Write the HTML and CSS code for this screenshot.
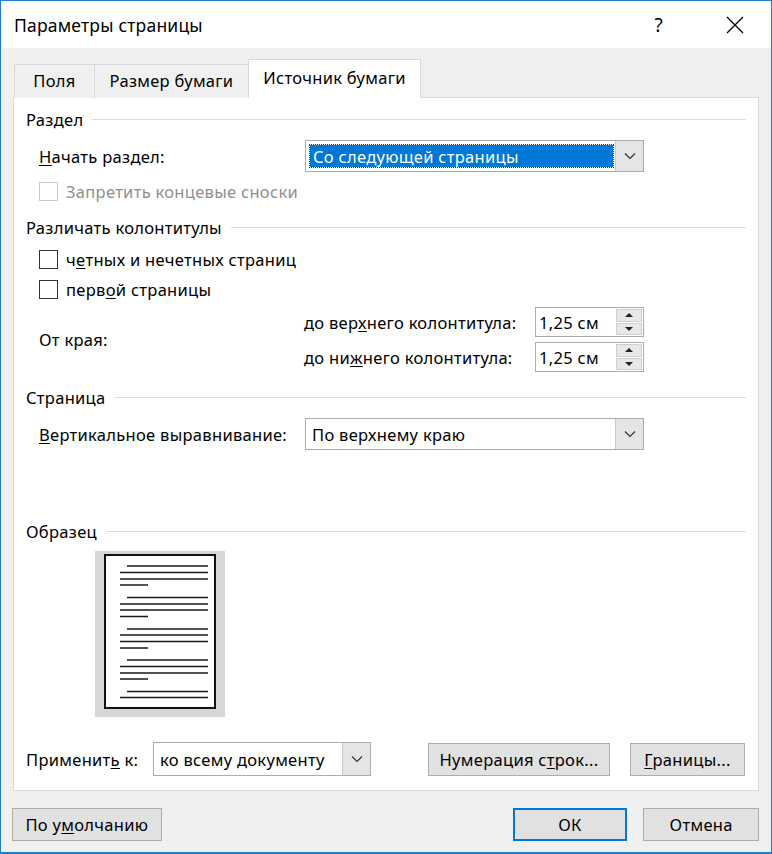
FILE: index.html
```html
<!DOCTYPE html>
<html lang="ru">
<head>
    <meta charset="UTF-8">
    <title>Параметры страницы</title>
    <link rel="stylesheet" href="styles.css">
</head>
<body>
<div class="dialog">
    <div class="titlebar">
        <span class="title">Параметры страницы</span>
        <span class="help">?</span>
        <svg class="close" width="18" height="18" viewBox="0 0 18 18">
            <path d="M1 1 L17 17 M17 1 L1 17" stroke="#000" stroke-width="1.3" fill="none"/>
        </svg>
    </div>

    <div class="body">
        <div class="tabs">
            <div class="tab">Поля</div>
            <div class="tab">Размер бумаги</div>
            <div class="tab active">Источник бумаги</div>
        </div>

        <div class="panel">
            <!-- Раздел -->
            <div class="group-title"><span>Раздел</span><i></i></div>
            <div class="row row-start">
                <span class="label"><u>Н</u>ачать раздел:</span>
                <div class="select select-wide focused">
                    <span class="select-text"><span class="sel">Со следующей страницы</span></span>
                    <span class="arrow"><svg width="12" height="8" viewBox="0 0 12 8"><path d="M1 1.5 L6 6.5 L11 1.5" stroke="#333" stroke-width="1.2" fill="none"/></svg></span>
                </div>
            </div>
            <div class="check disabled row-endnotes"><span class="box"></span>Запретить концевые сноски</div>

            <!-- Различать колонтитулы -->
            <div class="group-title gt-headers"><span>Различать колонтитулы</span><i></i></div>
            <div class="check row-even"><span class="box"></span>ч<u>е</u>тных и нечетных страниц</div>
            <div class="check row-first"><span class="box"></span>перв<u>о</u>й страницы</div>

            <div class="edge">
                <span class="label">От края:</span>
                <div class="spins">
                    <div class="spin-row">
                        <span class="spin-label">до вер<u>х</u>него колонтитула:</span>
                        <div class="spinner">
                            <span class="spin-value">1,25 см</span>
                            <span class="spin-btns">
                                <span class="up"></span>
                                <span class="down"></span>
                            </span>
                        </div>
                    </div>
                    <div class="spin-row">
                        <span class="spin-label">до ни<u>ж</u>него колонтитула:</span>
                        <div class="spinner">
                            <span class="spin-value">1,25 см</span>
                            <span class="spin-btns">
                                <span class="up"></span>
                                <span class="down"></span>
                            </span>
                        </div>
                    </div>
                </div>
            </div>

            <!-- Страница -->
            <div class="group-title gt-page"><span>Страница</span><i></i></div>
            <div class="row row-valign">
                <span class="label"><u>В</u>ертикальное выравнивание:</span>
                <div class="select select-wide">
                    <span class="select-text">По верхнему краю</span>
                    <span class="arrow"><svg width="12" height="8" viewBox="0 0 12 8"><path d="M1 1.5 L6 6.5 L11 1.5" stroke="#333" stroke-width="1.2" fill="none"/></svg></span>
                </div>
            </div>

            <!-- Образец -->
            <div class="group-title gt-sample"><span>Образец</span><i></i></div>
            <div class="preview">
                <svg width="130" height="166" viewBox="0 0 130 166">
                    <rect x="0" y="0" width="130" height="166" fill="#d7d7d7"/>
                    <rect x="10" y="4" width="110" height="153" fill="#fff" stroke="#111" stroke-width="2"/>
                    <g stroke="#1a1a1a" stroke-width="1.7">
                        <path d="M32 15 H113 M25 21.5 H113 M25 28 H113 M25 34 H53"/>
                        <path d="M32 46.5 H113 M25 53 H113 M25 59 H113 M25 65.5 H53"/>
                        <path d="M32 78 H113 M25 84 H113 M25 90.5 H113 M25 97 H53"/>
                        <path d="M32 109 H113 M25 115.5 H113 M25 122 H113 M25 128 H53"/>
                        <path d="M32 140.5 H113 M25 146.5 H113"/>
                    </g>
                </svg>
            </div>

            <div class="apply">
                <span class="apply-label">Применит<u>ь</u> к:</span>
                <div class="select select-apply">
                    <span class="select-text">ко всему документу</span>
                    <span class="arrow"><svg width="12" height="8" viewBox="0 0 12 8"><path d="M1 1.5 L6 6.5 L11 1.5" stroke="#333" stroke-width="1.2" fill="none"/></svg></span>
                </div>
                <button class="btn btn-lines">Нумерация с<u>т</u>рок...</button>
                <button class="btn btn-borders"><u>Г</u>раницы...</button>
            </div>
        </div>

        <div class="footer">
            <button class="btn btn-default">По у<u>м</u>олчанию</button>
            <button class="btn btn-ok">ОК</button>
            <button class="btn btn-cancel">Отмена</button>
        </div>
    </div>
</div>
</body>
</html>
```

FILE: styles.css
```css
* {
    margin: 0;
    padding: 0;
    box-sizing: border-box;
}
body {
    font-family: 'Noto Sans', 'Open Sans', sans-serif;
    font-size: 16.5px;
    letter-spacing: 0.3px;
    color: #000;
    background: #fff;
}
u {
    text-decoration: underline;
    text-underline-offset: 2px;
}

.dialog {
    width: 772px;
    height: 854px;
    border: 1px solid #1c7fd4;
    border-bottom-width: 2px;
    display: flex;
    flex-direction: column;
}

/* title bar */
.titlebar {
    height: 47px;
    background: #fff;
    display: flex;
    align-items: center;
    padding-left: 13px;
}
.title {
    font-size: 17.5px;
    letter-spacing: 0.2px;
    flex: 1;
}
.help {
    font-size: 19px;
    margin-right: 63px;
}
.close {
    margin-right: 27px;
}

.body {
    flex: 1;
    background: #f0f0f0;
    padding: 11px 12px 0 12px;
}

/* tabs */
.tabs {
    display: flex;
    align-items: flex-end;
    height: 39px;
    padding-left: 1px;
    position: relative;
    z-index: 1;
    margin-bottom: -1px;
}
.tab {
    height: 34px;
    line-height: 32px;
    border: 1px solid #d9d9d9;
    border-bottom: none;
    border-right: none;
    background: #f0f0f0;
    text-align: center;
}
.tab:first-child {
    width: 80px;
}
.tab:nth-child(2) {
    width: 154px;
}
.tab.active {
    height: 39px;
    width: 173px;
    padding-bottom: 2px;
    background: #fff;
    border-right: 1px solid #d9d9d9;
    line-height: 36px;
}

.panel {
    background: #fff;
    border: 1px solid #d9d9d9;
    height: 694px;
    padding: 10px 12px 0 12px;
}

.group-title {
    display: flex;
    align-items: center;
    height: 22px;
}
.group-title i {
    flex: 1;
    height: 1px;
    background: #dcdcdc;
    margin-left: 9px;
}
.gt-headers { margin-top: 14px; }
.gt-page { margin-top: 14px; }
.gt-sample { margin-top: 70px; }

.row {
    display: flex;
    align-items: center;
    padding-left: 13px;
}
.row .label {
    flex: 1;
}
.row-start {
    margin-top: 10px;
    padding-right: 102px;
}
.row-valign {
    margin-top: 10px;
    padding-right: 102px;
}

/* select boxes */
.select {
    height: 32px;
    border: 1px solid #acacac;
    display: flex;
    background: #fff;
}
.select-wide {
    width: 339px;
}
.select-text {
    flex: 1;
    padding: 0 6px;
    display: flex;
    align-items: center;
}
.focused .select-text {
    padding: 4px 2px 4px 4px;
}
.sel {
    display: flex;
    align-items: center;
    width: 100%;
    height: 100%;
    background: #0078d7;
    color: #fff;
    padding-left: 3px;
    outline: 1px dotted #333;
}
.arrow {
    width: 28px;
    background: #e5e5e5;
    border-left: 1px solid #c8c8c8;
    display: flex;
    align-items: center;
    justify-content: center;
}

/* checkboxes */
.check {
    display: flex;
    align-items: center;
    height: 22px;
    margin-left: 13px;
}
.check .box {
    width: 19px;
    height: 19px;
    border: 1px solid #333;
    margin-right: 8px;
    background: #fff;
}
.check.disabled {
    color: #8f8f8f;
}
.check.disabled .box {
    border-color: #cccccc;
}
.row-endnotes { margin-top: 8px; }
.row-even { margin-top: 10px; }
.row-first { margin-top: 8px; }

/* spinners */
.edge {
    display: flex;
    align-items: center;
    margin-top: 7px;
    padding-left: 13px;
    padding-right: 102px;
}
.edge .label {
    flex: 1;
}
.spins {
    display: flex;
    flex-direction: column;
    gap: 5px;
}
.spin-row {
    display: flex;
    align-items: center;
}
.spin-label {
    width: 231px;
}
.spinner {
    width: 109px;
    height: 30px;
    border: 1px solid #acacac;
    display: flex;
}
.spin-value {
    flex: 1;
    padding-left: 3px;
    display: flex;
    align-items: center;
}
.spin-btns {
    width: 27px;
    display: flex;
    flex-direction: column;
    padding: 1px 1px 1px 0;
    gap: 1px;
}
.spin-btns span {
    flex: 1;
    background: #e8e8e8;
    border: 1px solid #cfcfcf;
    display: flex;
    align-items: center;
    justify-content: center;
}
.spin-btns .up::before {
    content: "";
    border-left: 4px solid transparent;
    border-right: 4px solid transparent;
    border-bottom: 4px solid #222;
}
.spin-btns .down::before {
    content: "";
    border-left: 4px solid transparent;
    border-right: 4px solid transparent;
    border-top: 4px solid #222;
}

/* preview */
.preview {
    margin-top: 9px;
    margin-left: 69px;
    height: 166px;
}
.preview svg {
    display: block;
}

/* apply row */
.apply {
    display: flex;
    align-items: center;
    margin-top: 25px;
}
.apply-label {
    width: 127px;
}
.select-apply {
    width: 218px;
    height: 34px;
}
.btn {
    font-family: inherit;
    font-size: 16.5px;
    letter-spacing: 0.3px;
    color: #000;
    background: #e1e1e1;
    border: 1px solid #adadad;
    height: 33px;
}
.btn-lines {
    width: 182px;
    margin-left: 57px;
}
.btn-borders {
    width: 115px;
    margin-left: 20px;
}

.footer {
    display: flex;
    margin-top: 17px;
}
.btn-default {
    width: 150px;
    margin-left: -1px;
}
.btn-ok {
    width: 115px;
    margin-left: 351px;
    border: 2px solid #0078d7;
}
.btn-cancel {
    width: 116px;
    margin-left: 16px;
}
```
